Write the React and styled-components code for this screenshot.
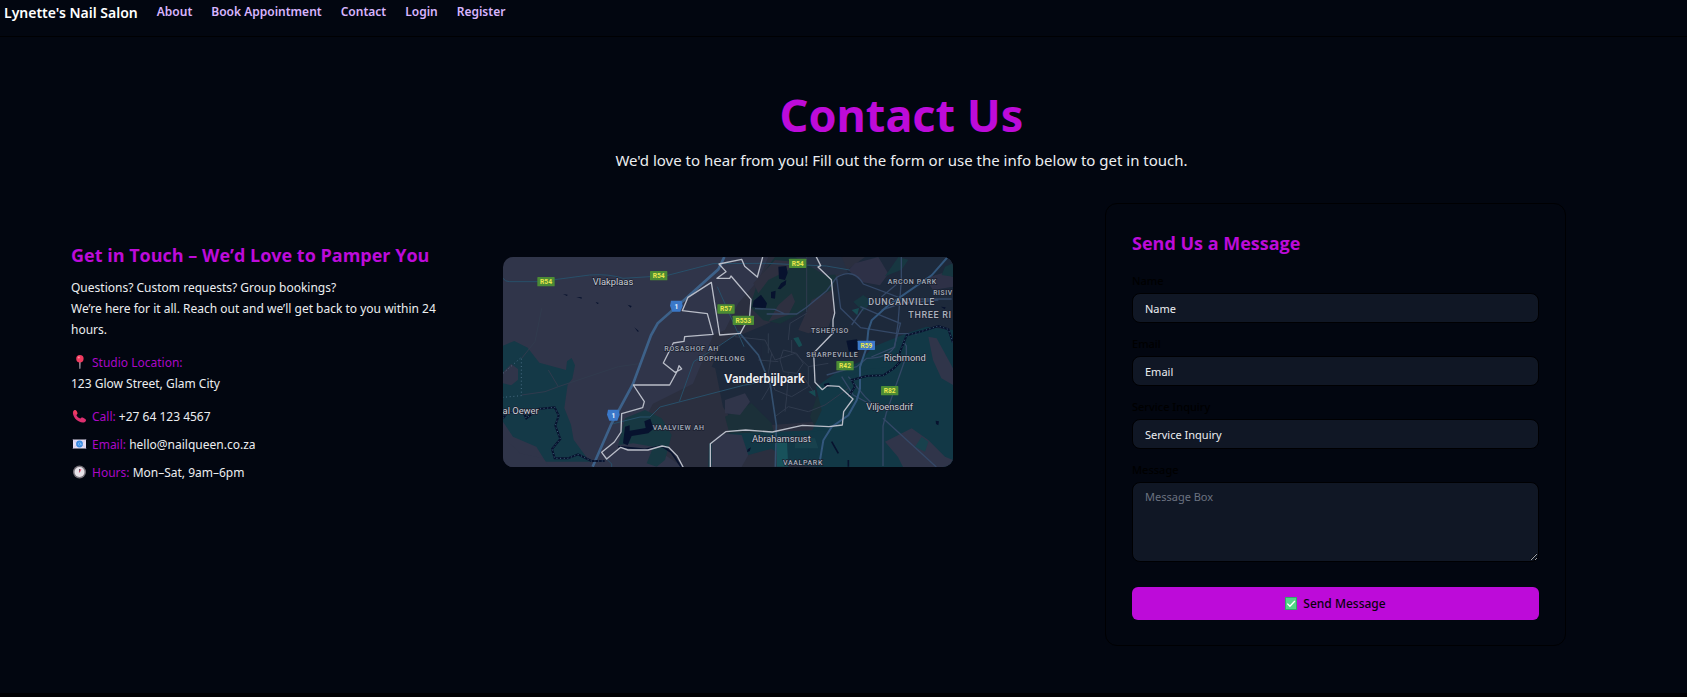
import React from "react";
import styled, { createGlobalStyle } from "styled-components";

const colors = {
  page: "#020610",
  line: "#000002",
  field: "#101725",
  accent: "#bd0bd9",
  accentDim: "#ab08c6",
  nav: "#d8b4fe",
  text: "#eceef1",
};

const GlobalStyle = createGlobalStyle`
  *, *::before, *::after { box-sizing: border-box; }
  body {
    margin: 0;
    background: #000003;
    color: ${colors.text};
    font-family: "Noto Sans", "Open Sans", sans-serif;
    font-size: 12px;
    line-height: 21px;
  }
  h1, h2, p { margin: 0; }
  a { color: inherit; text-decoration: none; }
`;

const Page = styled.div`
  background: ${colors.page};
`;

const Nav = styled.nav`
  display: flex;
  align-items: flex-start;
  gap: 19px;
  padding: 3px 4px 13px;
  border-bottom: 1px solid ${colors.line};
`;

const Brand = styled.a`
  color: #fff;
  font-size: 14px;
  font-weight: 600;
  line-height: 20px;
`;

const NavLink = styled.a`
  color: ${colors.nav};
  font-weight: 600;
  line-height: 18px;
`;

const Main = styled.main`
  padding: 54px 121px 47px 71px;
`;

const Intro = styled.header`
  display: flex;
  flex-direction: column;
  align-items: center;
  gap: 9px;
  margin-bottom: 31px;
  padding-left: 166px;
  text-align: center;
`;

const PageTitle = styled.h1`
  color: ${colors.accent};
  font-size: 45px;
  font-weight: 700;
  line-height: 48px;
`;

const Lead = styled.p`
  font-size: 15px;
  line-height: 24px;
`;

const Columns = styled.div`
  display: grid;
  grid-template-columns: minmax(0, 432fr) minmax(0, 602fr) minmax(0, 461fr);
  align-items: start;
`;

const Info = styled.section`
  display: flex;
  flex-direction: column;
  gap: 12px;
  padding: 38px 48px 0 0;
`;

const SectionTitle = styled.h2`
  color: ${colors.accent};
  font-family: "Open Sans", "Noto Sans", sans-serif;
  font-size: 18px;
  font-weight: 700;
  line-height: 28px;
  margin-bottom: ${(p) => p.$space};
`;

const ContactList = styled.div`
  display: flex;
  flex-direction: column;
  gap: 7px;
`;

const Detail = styled.p`
  svg {
    width: 17px;
    height: 14px;
    margin-right: 4px;
    vertical-align: -2px;
  }
`;

const Term = styled.span`
  color: ${colors.accentDim};
`;

const MapArea = styled.section`
  padding: 54px 152px 0 0;
`;

const MapFrame = styled.div`
  overflow: hidden;
  border-radius: 10px;
  line-height: 0;

  svg {
    display: block;
    width: 100%;
    height: auto;
  }
`;

const Card = styled.form`
  padding: 25px 26px;
  border: 1px solid ${colors.line};
  border-radius: 12px;
`;

const Fields = styled.div`
  display: flex;
  flex-direction: column;
  gap: 13px;
  margin-bottom: 25px;
`;

const Field = styled.div`
  display: flex;
  flex-direction: column;
  gap: 4px;
`;

const Label = styled.label`
  color: #000;
  font-size: 11px;
  font-weight: 500;
  line-height: 16px;
`;

const Input = styled.input`
  width: 100%;
  height: 30px;
  padding: 0 12px;
  border: 1px solid ${colors.line};
  border-radius: 8px;
  outline: 0;
  background: ${colors.field};
  color: ${colors.text};
  font: inherit;
  font-size: 11px;
`;

const TextArea = styled.textarea`
  display: block;
  width: 100%;
  height: 80px;
  padding: 6px 12px;
  border: 1px solid ${colors.line};
  border-radius: 8px;
  outline: 0;
  background: ${colors.field};
  color: ${colors.text};
  font: inherit;
  font-size: 11px;
  line-height: 16px;
  resize: vertical;

  &::placeholder { color: #6b7280; }
`;

const SubmitButton = styled.button`
  display: flex;
  align-items: center;
  justify-content: center;
  gap: 6px;
  width: 100%;
  height: 33px;
  border: 0;
  border-radius: 6px;
  background: ${colors.accent};
  color: #08000b;
  font: inherit;
  font-weight: 500;
  cursor: pointer;

  svg { width: 12px; height: 13px; }
`;

const PinIcon = () => (
  <svg viewBox="0 0 17 14" aria-hidden="true">
    <path d="M8.2 6h1.4l-.2 7.4-.5.6-.5-.6z" fill="#b9aab8" />
    <circle cx="8.9" cy="3.7" r="3.7" fill="#f03a5f" />
    <circle cx="7.8" cy="2.5" r="1.1" fill="#ff8a9c" />
  </svg>
);

const PhoneIcon = () => (
  <svg viewBox="0 0 17 14" aria-hidden="true">
    <path
      d="M2.3 2.2C3 .8 4.7.6 5.4 1.8l1 2c.4.9-.4 1.7-1 2.2.7 1.6 2.1 2.9 4 3.6.5-.8 1.4-1.4 2.4-1l2.5 1.3c1.2.7.8 2.3-.3 3-1.5 1-3.9.7-5.9-.3C5.1 11 3 8.5 2.2 5.7c-.4-1.2-.4-2.5.1-3.5z"
      fill="#dc2f6f"
    />
    <path d="M2.6 2.1C3.3 1 4.8.9 5.3 2l.9 1.8c.3.7-.3 1.4-.9 1.9L3.1 4z" fill="#ef3e5b" />
  </svg>
);

const MailIcon = () => (
  <svg viewBox="0 0 17 14" aria-hidden="true">
    <path d="M2 2.5h13v9H2z" fill="#e5dcf3" />
    <path d="M2 2.5l4.5 4.5L2 11.5M15 2.5L10.5 7l4.5 4.5" fill="none" stroke="#cdbfe4" strokeWidth=".7" />
    <circle cx="8.5" cy="7" r="3.4" fill="#3988df" />
    <circle cx="8.5" cy="7" r="1.3" fill="none" stroke="#89c1fb" strokeWidth=".7" />
    <path d="M9.8 5.7v1.6c0 1 1.2.8 1.2-.3" fill="none" stroke="#89c1fb" strokeWidth=".6" />
  </svg>
);

const ClockIcon = () => (
  <svg viewBox="0 0 17 14" aria-hidden="true">
    <circle cx="8.5" cy="7" r="6.5" fill="#77727a" />
    <circle cx="8.5" cy="7" r="5" fill="#e7e2e9" />
    <path d="M8.5 7.2V4" stroke="#4b4450" strokeWidth=".9" fill="none" />
    <path d="M8.4 7.3l1.5-3.2" stroke="#e8476a" strokeWidth="1" />
  </svg>
);

const CheckIcon = () => (
  <svg viewBox="0 0 12 13" aria-hidden="true">
    <path d="M0 0h12v13H0z" fill="#34a56b" />
    <path d="M1 1h10v11H1z" fill="#53d487" />
    <path d="M2.3 6.6l2.6 2.7 5-5.3" fill="none" stroke="#fff" strokeWidth="1.3" />
  </svg>
);

const roadBadges = [
  { x: 153, y: 95, t: "R54" },
  { x: 491, y: 77, t: "R54" },
  { x: 693, y: 177, t: "R57" },
  { x: 745, y: 211, t: "R553", w: 64 },
  { x: 908, y: 40, t: "R54" },
  { x: 1050, y: 347, t: "R42" },
  { x: 1184, y: 422, t: "R82" },
  { x: 1114, y: 286, t: "R59", c: "#3c78c8" },
];

const towns = [
  { x: 354, y: 104, t: "Vlakplaas" },
  { x: 77, y: 491, t: "al Oewer" },
  { x: 1229, y: 333, t: "Richmond" },
  { x: 1184, y: 479, t: "Viljoensdrif" },
  { x: 859, y: 577, t: "Abrahamsrust" },
];

const suburbs = [
  { x: 590, y: 302, t: "ROSASHOF AH" },
  { x: 681, y: 332, t: "BOPHELONG" },
  { x: 551, y: 540, t: "VAALVIEW AH" },
  { x: 1005, y: 248, t: "TSHEPISO" },
  { x: 1012, y: 322, t: "SHARPEVILLE" },
  { x: 924, y: 644, t: "VAALPARK" },
  { x: 1252, y: 103, t: "ARCON PARK" },
  { x: 1344, y: 135, t: "RISIV", s: 20 },
  { x: 1220, y: 166, t: "DUNCANVILLE", s: 27 },
  { x: 1305, y: 205, t: "THREE RI", s: 27 },
];

const MapText = styled.text`
  font-family: Roboto, sans-serif;
  font-size: ${(p) => p.$size}px;
  font-weight: ${(p) => p.$weight || 400};
  fill: ${(p) => p.$fill};
  stroke: #1b2030;
  stroke-width: ${(p) => (p.$plain ? 0 : 4)}px;
  paint-order: stroke;
  text-anchor: middle;
`;

const Shield = ({ x, y }) => (
  <g>
    <path d={`M${x - 16} ${y - 17}h32l3 15-7 18h-24l-7-18z`} fill="#3a78c9" />
    <MapText x={x} y={y + 7} $size={20} $weight={700} $fill="#eef3fb" $plain>1</MapText>
  </g>
);

const AreaMap = () => (
  <svg viewBox="24 21 1350 630" role="img" aria-label="Map of Vanderbijlpark">
    <path d="M24 21h1350v630H24z" fill="#30354a" />

    {/* built-up and farm land */}
    <path d="M655 255L690 240l40-80 60-70 30-69h554v240l-180 60-130 260-120 70-280 40-70-20-120-80-60-20 60-110 120-60z" fill="#2b2f3f" />
    <path d="M700 270l120-50 110-60 60-50 120-89h264v240l-140 10-60 60-90 40-40 90-30 50-130 10-160 10-40-60-30-150z" fill="#1d293b" />
    <path d="M650 350l30-70 60-30 60 30v80l-70 20z" fill="#1d283b" />
    <path d="M790 90l50-69h140l45 60-20 50-90 60-60 30-50-10-40-40z" fill="#183239" />
    <path d="M775 100l65-70 60 5-20 25-60 30-30 40zM850 165l40-35 10 25-20 40-60 20zM910 240l40-90 60-30 10 60-20 50-60 20z" fill="#2e3040" />
    <path d="M900 21h140l20 50-70 5-50-30z" fill="#263043" />
    <path d="M1080 40l70-19 30 50-25 35-55-10-40-35zM1290 85l50-15 34 10v30l-60 10z" fill="#2e3147" />
    <path d="M1210 21l30 8-20 30-50 20zM1350 50l24-10v40l-34-5zM1075 155l30-20 25 20-25 30z" fill="#173741" />
    <path d="M945 500l20-60 90-35 15 40-30 40-10 50-70-5z" fill="#1b3039" />
    <path d="M690 500l80-40 60 60 10 40-130 15z" fill="#1b3039" />

    {/* green land by the river */}
    <path d="M24 287l34-14 40 20 35 45 80 22 3-26 14-10 10 22-8 40-14 18-10 70 20 50 8 45 40 55 25 11H152l-28-45-70-30-30-45z" fill="#143947" />
    <path d="M24 367l25-25 20 15v32l-20 17-25-6zM24 560l50 50 70 15 20 26H24z" fill="#30354a" />
    <path d="M1235 250l60-20 79 10v411H980l-80-5-70-50-110 30-80 25 2-70 50-30 140-5 120-5 28-60 -17-70 70-50 60-25 42-46z" fill="#123846" />
    <path d="M940 545l95-8 10-50 28-40-10-70 60-20 60-5 20-50 30-50 60-20 81 10v400H940z" fill="#123846" />
    <path d="M370 585l20-80 60-25 50 25 30 50-20 75-25 20-30-10 20-50-60-10z" fill="#173842" />
    <path d="M650 580l25-30 65 5 20 60-20 36h-90z" fill="#30354a" />
    <path d="M1300 260l25 5 49 90v50l-35-20-25-55zM1170 575l80-40 50 35 50 50 24 10v21h-150l-15-30zM690 450l60-20 15 25-30 40-45-5z" fill="#30354a" />
    <path d="M1260 590l20-30 20 15-10 30zM900 560l60 5 10 30-70 0z" fill="#18414d" />
    <path d="M845 560h30l5 90h-35z" fill="#18525b" />
    <path d="M895 265l15-4 12 25-10 6zM1070 180l22-6-5 22zM940 425l20-5 2 20z" fill="#174c53" />

    {/* water */}
    <path d="M850 50l24-2 4 20-8 22-18-4zM848 116l10-16 16-10-2 14-16 14zM828 126l14-4-2 24-12-2zM776 152l22-18 18 26-4 14-40-2zM1054 272l32-4 6 34-30 6z" fill="#07122e" />
    <path d="M384 580l6-50 14-4v16l48-8-4-20 18-8 10 30-16 14-50 8-12 28zM204 132l14 2-2 4zM244 141l16 1v4zM302 156l10 3-5 3zM398 164l12 4-3 5zM418 232l14 12-4 1zM758 598l10-6-4 12-8 2zM1322 512l10 2-2 12-7-4zM1338 170l14 2-3 6zM986 402l16-4 4 12-14 4z" fill="#07122e" />
    <path d="M370 590l80 8 50-10 30 20 28 42M1010 575l20 35M1060 630v20" fill="none" stroke="#07122e" strokeWidth="5" />

    {/* minor roads */}
    <g fill="none" stroke="#28506a" strokeWidth="3">
      <path d="M24 85q6 10 20 10h90l150-20q60-4 100 10l130-8 140-36 160-1 180 8 70 12" />
      <path d="M667 110l80 180M553 455l43-120 80-50 60-40M355 521l80-20h30l30-30 250-65 150-28M330 622l20 20v10" />
    </g>
    <g fill="none" stroke="#303b4e" strokeWidth="3">
      <path d="M720 260l90 10 30 60 60-20 40 40v60l-50 30-50-20-20-50 10-60M865 300l40 10 20 30-20 30-40-5-10-35zM790 330l60 5M940 350l60-10M880 370l-5 70-5 45M915 365l40 60M830 400l-30 50M820 250v60M880 270l5-50 50-30M890 270v40M935 21v165M840 500l40-30 60 15 50-20 70-50" />
      <path d="M190 410l180-60 70-10M190 410l-30-50M80 435l70-10 40-15M80 325l40-50 20-100" />
    </g>
    <g fill="none" stroke="#344867" strokeWidth="4">
      <path d="M815 192l90 0 30-20 60-50 30-40q50-30 80 20l120 45h145M780 176l60 2 30 14M1025 85l12 90 60 58 110 18h60M1096 170l70 30 50 20M1105 175l-35 50M1219 21v70l-10 130-10 70-70 30M1160 180l60-20 110-10M1219 91l-60 50M1224 272l10 16v30l-60 170-10 40v120M1164 505l160 146M1040 380l35 55 55 30" />
      <path d="M995 375l90-25 30-25q60 0 82-32l20-75M1060 380l50 60 20 20" />
    </g>

    {/* main roads */}
    <path d="M688 21l-18 37-100 90-82 72-20 36-54 146-65 120-56 128" fill="none" stroke="#3d6189" strokeWidth="8" />
    <path d="M1358 21l-48 55-130 90-50 45-10 30-5 50-20 60v65l-10 35-25 45-50 35-25 40-10 60" fill="none" stroke="#33577d" strokeWidth="6" />
    <path d="M730 245l60 70 36 90 18 120-3 125" fill="none" stroke="#34506f" strokeWidth="5" />

    {/* river */}
    <g fill="none" stroke="#07122e" strokeWidth="6">
      <path d="M24 505l15-20 45 0 10 20 35-28 50-5 12 25-10 30 15 40-25 30 8 28 40 0 30-12 40 20 40 0" />
      <path d="M1060 440l20-30-10-20 45-12 50-2 30-20 20-20 0-30 20-50 45-12 50-16 30 10 14 40" />
    </g>
    <g fill="none" stroke="#6486a3" strokeWidth="2" strokeDasharray="3 8">
      <path d="M24 505l15-20 45 0 10 20 35-28 50-5 12 25-10 30 15 40-25 30 8 28 40 0 30-12 40 20 40 0" />
      <path d="M1060 440l20-30-10-20 45-12 50-2 30-20 20-20 0-30 20-50 45-12 50-16 30 10 14 40M24 370l55-48v115l-55 5" />
    </g>

    {/* municipal border */}
    <g fill="none" stroke="#b9bdc8" strokeWidth="4" strokeLinejoin="round">
      <path d="M803 21l-16 60-38-32-9-21-68 14 21 23-27 20 38 0 4-7 60 70-4 50-28 52-62 5-25-158-70 45-17 40 75 9 17 62-85 7-2 14-32 5-30 60 35 28 20-10-8-10-5 16-23 42H415l33 50-5 18-63 18-2 55-20 30-38 31 15 20 42-35 22 8 60 0 42-12 20 4 25 25 23 43" />
      <path d="M646 651v-70l46-36 60-5 80 6 90-20 80 4 40-5 4-40 28-38-42-38-35-2-15 12-22-22-4-88 58-60v-40l5-20-10-100-40-38 8-4-17-34" />
    </g>

    <Shield x={544} y={169} />
    <Shield x={355} y={496} />

    {roadBadges.map(({ x, y, t, w = 52, c = "#4b8b35" }) => (
      <g key={`${t}-${x}`}>
        <rect x={x - w / 2} y={y - 14} width={w} height={28} rx="2" fill={c} />
        <MapText x={x} y={y + 7} $size={20} $weight={700} $fill="#e9e64c" $plain>{t}</MapText>
      </g>
    ))}
    {suburbs.map(({ x, y, t, s = 21 }) => (
      <MapText key={t} x={x} y={y} $size={s} $weight={500} $fill="#a9b0bc" letterSpacing="2">{t}</MapText>
    ))}
    {towns.map(({ x, y, t }) => (
      <MapText key={t} x={x} y={y} $size={28} $fill="#c9ced6">{t}</MapText>
    ))}
    <MapText x={808} y={398} $size={37} $weight={600} $fill="#f0f2f5">Vanderbijlpark</MapText>
  </svg>
);

const navLinks = ["About", "Book Appointment", "Contact", "Login", "Register"];

const details = [
  { Icon: PhoneIcon, term: "Call:", value: "+27 64 123 4567" },
  { Icon: MailIcon, term: "Email:", value: "hello@nailqueen.co.za" },
  { Icon: ClockIcon, term: "Hours:", value: "Mon–Sat, 9am–6pm" },
];

const inputs = [
  { id: "name", label: "Name" },
  { id: "email", label: "Email" },
  { id: "service", label: "Service Inquiry" },
];

export default function App() {
  return (
    <Page>
      <GlobalStyle />
      <Nav>
        <Brand href="#home">Lynette's Nail Salon</Brand>
        {navLinks.map((name) => (
          <NavLink key={name} href={`#${name.toLowerCase().replace(" ", "-")}`}>{name}</NavLink>
        ))}
      </Nav>
      <Main>
        <Intro>
          <PageTitle>Contact Us</PageTitle>
          <Lead>We'd love to hear from you! Fill out the form or use the info below to get in touch.</Lead>
        </Intro>
        <Columns>
          <Info>
            <div>
              <SectionTitle $space="8px">Get in Touch – We’d Love to Pamper You</SectionTitle>
              <p>
                Questions? Custom requests? Group bookings?
                <br />
                We’re here for it all. Reach out and we’ll get back to you within 24 hours.
              </p>
            </div>
            <Detail>
              <PinIcon />
              <Term>Studio Location:</Term>
              <br />
              123 Glow Street, Glam City
            </Detail>
            <ContactList>
              {details.map(({ Icon, term, value }) => (
                <Detail key={term}>
                  <Icon />
                  <Term>{term}</Term> {value}
                </Detail>
              ))}
            </ContactList>
          </Info>
          <MapArea>
            <MapFrame>
              <AreaMap />
            </MapFrame>
          </MapArea>
          <Card onSubmit={(e) => e.preventDefault()}>
            <SectionTitle $space="16px">Send Us a Message</SectionTitle>
            <Fields>
              {inputs.map(({ id, label }) => (
                <Field key={id}>
                  <Label htmlFor={id}>{label}</Label>
                  <Input id={id} name={id} defaultValue={label} />
                </Field>
              ))}
              <Field>
                <Label htmlFor="message">Message</Label>
                <TextArea id="message" name="message" placeholder="Message Box" />
              </Field>
            </Fields>
            <SubmitButton type="submit">
              <CheckIcon />
              Send Message
            </SubmitButton>
          </Card>
        </Columns>
      </Main>
    </Page>
  );
}
